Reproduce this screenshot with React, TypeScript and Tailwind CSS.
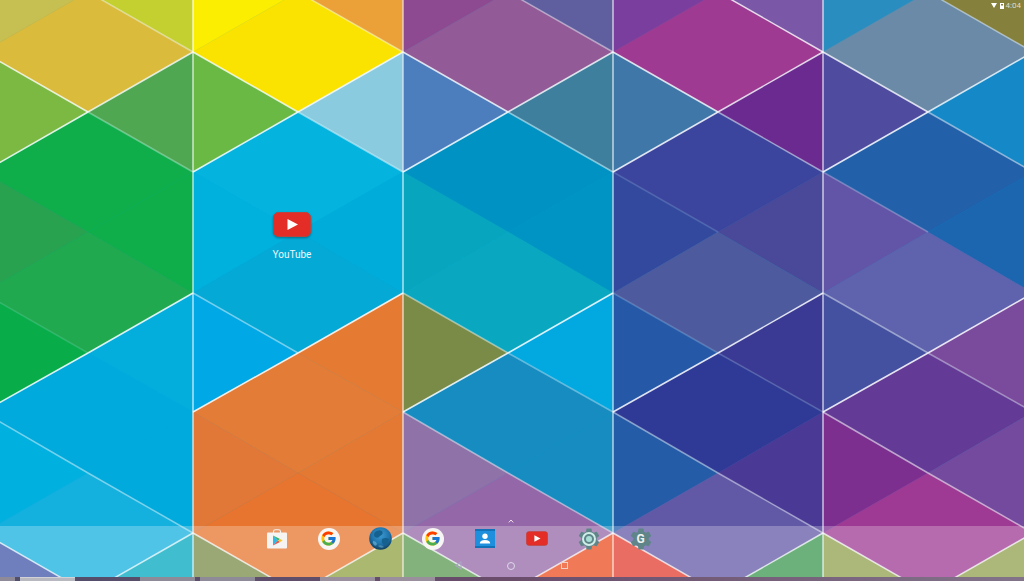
import type { ReactNode } from "react";
import { FcGoogle } from "react-icons/fc";
import { MdSettings } from "react-icons/md";

// lattice rows: even columns sit on Y0 + n * 120.3, odd columns are half a step off
const L = [-17, 88, 193]; // one strip: left edge, middle, right edge
const rowY = { a: -68, b: -8, c: 52, d: 112, e: 172, f: 232, g: 293, h: 353, i: 412, j: 473, k: 533, l: 593 };

type Strip = {
  x: number;
  topL: string;
  top: string;
  topR: string;
  l1: string;
  r1: string;
  d2: string;
  l2: string;
  r2: string;
  d3: string;
  l3: string;
  r3: string;
  d4: string;
  l4: string;
  r4: string;
  d5: string;
};

const strips: Strip[] = [
  { x: 0, topL: "#c6bf52", top: "#dabb3c", topR: "#c3d030", l1: "#7bb943", r1: "#50a752", d2: "#0fae4b", l2: "#29a24f", r2: "#0fae4b", d3: "#20a94e", l3: "#08ad4a", r3: "#03aedd", d4: "#00aadc", l4: "#00b1e0", r4: "#00aadc", d5: "#14b0de" },
  { x: 210, topL: "#fbee00", top: "#fae300", topR: "#eba038", l1: "#6bb945", r1: "#8bcbe0", d2: "#04b3de", l2: "#00b0dd", r2: "#00acd9", d3: "#04a9d6", l3: "#00a8e6", r3: "#e57a33", d4: "#e37c37", l4: "#e27838", r4: "#e47934", d5: "#e7752f" },
  { x: 420, topL: "#8e4a90", top: "#925a96", topR: "#5f5f9f", l1: "#4c7dbd", r1: "#3e7f9e", d2: "#0092c2", l2: "#08a5bf", r2: "#0094c4", d3: "#0aa8c0", l3: "#7a8b47", r3: "#02a8e0", d4: "#168cc0", l4: "#8f72a8", r4: "#168cc0", d5: "#9468a8" },
  { x: 630, topL: "#7a3f9e", top: "#9e3a92", topR: "#7b57a8", l1: "#3f78a8", r1: "#6a2a90", d2: "#3b459e", l2: "#32499e", r2: "#4a4898", d3: "#4d5a9e", l3: "#2559a8", r3: "#3a3a94", d4: "#2e3a96", l4: "#255ca8", r4: "#4a3a96", d5: "#6259a6" },
  { x: 840, topL: "#2a8dbf", top: "#6a8aa8", topR: "#85803c", l1: "#4f4c9f", r1: "#1589c8", d2: "#2260aa", l2: "#6255a8", r2: "#1c66b0", d3: "#5f62ad", l3: "#4450a0", r3: "#7a4a9c", d4: "#633a96", l4: "#7d2f90", r4: "#734a9e", d5: "#9e3a94" },
];

const poly = (p: number[][]) => p.map((q) => q.join(",")).join(" ");

// a line goes strip index, from node, to node, opacity
const diag = (
  s: number,
  a: number,
  ay: number,
  b: number,
  by: number,
  o: number
) => (
  <line
    key={`${s}-${a}-${ay}-${b}-${by}`}
    x1={L[a] + s * 210}
    y1={ay}
    x2={L[b] + s * 210}
    y2={by}
    stroke="#fff"
    strokeOpacity={o}
    strokeWidth={1.5}
  />
);

const Wallpaper = () => {
  const { a, b, c, d, e, f, g, h, i, j, k, l } = rowY;
  return (
    <svg className="absolute inset-0 blur-[0.4px]" width={1024} height={581} viewBox="0 0 1024 581">
      {strips.map((s) => {
        const [x0, x1, x2] = [L[0] + s.x, L[1] + s.x, L[2] + s.x];
        const tris: [string, number[][]][] = [
          [s.topL, [[x0, a], [x1, b], [x0, c]]],
          [s.topR, [[x2, a], [x1, b], [x2, c]]],
          [s.topL, [[x0, a], [x2, a], [x1, b]]],
          [s.top, [[x0, c], [x1, b], [x2, c], [x1, d]]],
          [s.l1, [[x0, c], [x1, d], [x0, e]]],
          [s.r1, [[x2, c], [x1, d], [x2, e]]],
          [s.d2, [[x0, e], [x1, d], [x2, e], [x1, f]]],
          [s.l2, [[x0, e], [x1, f], [x0, g]]],
          [s.r2, [[x2, e], [x1, f], [x2, g]]],
          [s.d3, [[x0, g], [x1, f], [x2, g], [x1, h]]],
          [s.l3, [[x0, g], [x1, h], [x0, i]]],
          [s.r3, [[x2, g], [x1, h], [x2, i]]],
          [s.d4, [[x0, i], [x1, h], [x2, i], [x1, j]]],
          [s.l4, [[x0, i], [x1, j], [x0, k]]],
          [s.r4, [[x2, i], [x1, j], [x2, k]]],
          [s.d5, [[x0, k], [x1, j], [x2, k], [x1, l]]],
        ];
        return tris.map(([fill, pts], n) => (
          <polygon key={`${s.x}-${n}`} points={poly(pts)} fill={fill} stroke={fill} strokeWidth={0.5} />
        ));
      })}

      {/* bottom triangles, only seen through the dock */}
      <polygon points={poly([[-17, 533], [88, 593], [-17, 653]])} fill="#3f55a8" />
      <polygon points={poly([[193, 533], [88, 593], [193, 653]])} fill="#00a9c0" />
      <polygon points={poly([[193, 533], [298, 593], [193, 653]])} fill="#798b49" />
      <polygon points={poly([[403, 533], [298, 593], [403, 653]])} fill="#8fa03f" />
      <polygon points={poly([[403, 533], [508, 593], [403, 653]])} fill="#5b9950" />
      <polygon points={poly([[613, 533], [508, 593], [613, 653]])} fill="#eb4d20" />
      <polygon points={poly([[613, 533], [718, 593], [613, 653]])} fill="#e33c2f" />
      <polygon points={poly([[823, 533], [718, 593], [823, 653]])} fill="#3b9650" />
      <polygon points={poly([[823, 533], [928, 593], [823, 653]])} fill="#91a04d" />
      <polygon points={poly([[1033, 533], [928, 593], [1033, 653]])} fill="#91a04d" />

      {[193, 403, 613, 823].map((x) => (
        <line key={x} x1={x} y1={0} x2={x} y2={581} stroke="#fff" strokeOpacity={0.65} strokeWidth={1.6} />
      ))}

      {/* strongest seams around the upper hexagons */}
      {[0, 1, 2, 3, 4].flatMap((s) => [
        diag(s, 0, c, 1, d, 0.8),
        diag(s, 1, d, 2, c, 0.8),
        diag(s, 0, e, 1, d, 0.85),
        diag(s, 1, d, 2, e, s === 0 ? 0.35 : 0.5),
        diag(s, 0, i, 1, h, 0.85),
        diag(s, 1, h, 2, g, 0.85),
        diag(s, 1, b, 2, c, s === 3 ? 0.8 : 0.45),
        diag(s, 0, k, 1, l, 0.75),
        diag(s, 1, l, 2, k, 0.75),
      ])}

      {/* softer seams */}
      {diag(0, 0, i, 1, j, 0.45)}
      {diag(0, 1, j, 2, k, 0.45)}
      {diag(0, 0, g, 1, h, 0.15)}
      {diag(1, 0, g, 1, h, 0.45)}
      {diag(2, 0, g, 1, h, 0.45)}
      {diag(2, 1, h, 2, i, 0.35)}
      {diag(2, 0, i, 1, j, 0.45)}
      {diag(2, 1, j, 2, k, 0.45)}
      {diag(3, 0, g, 1, h, 0.2)}
      {diag(3, 1, h, 2, i, 0.2)}
      {diag(3, 0, i, 1, j, 0.45)}
      {diag(3, 1, j, 2, k, 0.45)}
      {diag(4, 0, g, 1, h, 0.45)}
      {diag(4, 1, h, 2, i, 0.4)}
      {diag(4, 0, i, 1, j, 0.55)}
      {diag(4, 1, j, 2, k, 0.55)}
      {diag(3, 0, e, 1, f, 0.15)}
      {diag(4, 0, e, 1, f, 0.25)}
    </svg>
  );
};

const YouTubeIcon = ({ w, h }: { w: number; h: number }) => (
  <svg width={w} height={h} viewBox="0 0 38 25">
    <rect x={0.5} y={0.5} width={37} height={24} rx={5} fill="#e52d27" stroke="#b8453f" strokeWidth={1} />
    <path d="M14.5 7 L25 12.5 L14.5 18 Z" fill="#fff" />
  </svg>
);

const PlayStore = () => (
  <svg width={22} height={20} viewBox="0 0 22 20">
    <path d="M7.5 4 V2.5 Q7.5 .8 9.5 .8 H12.5 Q14.5 .8 14.5 2.5 V4" fill="none" stroke="#f4f4f4" strokeWidth={1.1} />
    <rect x={1} y={3.5} width={20} height={16} rx={1} fill="#f6f4f2" />
    <path d="M7 6.5 L12 11.5 L7 16.5 Z" fill="#2fb8e8" />
    <path d="M7 6.5 L14 10 L12 11.5 Z" fill="#35b06a" />
    <path d="M7 16.5 L14 13 L12 11.5 Z" fill="#e8524a" />
    <path d="M14 10 L16.6 11.5 L14 13 L12 11.5 Z" fill="#f8c62c" />
  </svg>
);

const Globe = () => (
  <svg width={23} height={23} viewBox="0 0 23 23">
    <defs>
      <radialGradient id="globe" cx="50%" cy="35%" r="65%">
        <stop offset="0%" stopColor="#3a9ad0" />
        <stop offset="62%" stopColor="#1e72aa" />
        <stop offset="100%" stopColor="#123e5e" />
      </radialGradient>
    </defs>
    <circle cx={11.5} cy={11.5} r={11.3} fill="url(#globe)" />
    <path d="M6 5 Q10 2 13 4 Q15 7 11 9 Q9 12 6 10 Q4 8 6 5Z" fill="#14608e" />
    <path d="M13 12 Q17 10 20 12 Q19 17 15 18 Q12 16 13 12Z" fill="#14608e" />
    <path d="M4 14 Q7 14 8 17 Q7 20 5 18 Q3 16 4 14Z" fill="#8ccbe6" fillOpacity={0.5} />
    <path d="M9 19 Q12 17 15 20 Q12 22 9 19Z" fill="#8ccbe6" fillOpacity={0.4} />
  </svg>
);

const GoogleBadge = () => (
  <div className="flex h-[22px] w-[22px] items-center justify-center rounded-full bg-[#f8f6f4]">
    <FcGoogle size={17} />
  </div>
);

const Contacts = () => (
  <svg width={20} height={19} viewBox="0 0 20 19">
    <rect x={0} y={0} width={20} height={19} rx={1} fill="#1e8fdc" />
    <rect x={0} y={0} width={20} height={2} fill="#1272b8" />
    <rect x={0} y={17} width={20} height={2} fill="#1272b8" />
    <circle cx={10} cy={7.2} r={2.7} fill="#fff" />
    <path d="M4.8 14.5 Q4.8 11 10 11 Q15.2 11 15.2 14.5 Z" fill="#fff" />
  </svg>
);

const Gear = ({ children }: { children: ReactNode }) => (
  <div className="relative flex h-[26px] w-[26px] items-center justify-center">
    <MdSettings size={26} color="#5f8589" className="absolute inset-0" />
    {children}
  </div>
);

const dockItem = "flex h-[24px] w-[26px] items-center justify-center";

const App = () => {
  return (
    <div className="relative flex h-[581px] w-[1024px] flex-col overflow-hidden bg-[#00aadc] font-['Roboto',sans-serif]">
      <Wallpaper />

      {/* status bar */}
      <div className="relative flex h-[11px] items-center justify-end pr-[3px] text-[8px] leading-none text-[#dcdccc]">
        <svg width={6} height={5} viewBox="0 0 6 5" className="mr-[3px]">
          <path d="M0 0 H6 L3 5 Z" fill="#fff" />
        </svg>
        <svg width={4} height={6} viewBox="0 0 4 6" className="mr-[2px]">
          <rect x={0.5} y={0.5} width={3} height={5} fill="none" stroke="#fff" strokeWidth={1} />
          <rect x={1} y={2.5} width={2} height={3} fill="#fff" />
        </svg>
        <span>4:04</span>
      </div>

      {/* desktop */}
      <div className="relative flex-1 pl-[262px] pt-[201px]">
        <div className="flex w-[60px] flex-col items-center">
          <div className="drop-shadow-[0_1px_1px_rgba(0,0,0,0.35)]">
            <YouTubeIcon w={38} h={25} />
          </div>
          <span className="mt-[12px] text-[10px] leading-[12px] text-[#eef7fb]">YouTube</span>
        </div>
      </div>

      {/* all apps arrow */}
      <div className="relative flex h-[7px] items-start justify-center">
        <svg width={6} height={4} viewBox="0 0 6 4" className="ml-[-2px]">
          <path d="M.8 3.4 L3 1 L5.2 3.4" fill="none" stroke="#eee3ee" strokeWidth={1} />
        </svg>
      </div>

      {/* dock + nav */}
      <div className="relative flex h-[51px] flex-col items-center bg-white/25">
        <div className="mr-[107px] flex h-[24px] items-center gap-[26px] pt-[1px]">
          <div className={dockItem}><PlayStore /></div>
          <div className={dockItem}><GoogleBadge /></div>
          <div className={dockItem}><Globe /></div>
          <div className={dockItem}><GoogleBadge /></div>
          <div className={dockItem}><Contacts /></div>
          <div className={dockItem}><YouTubeIcon w={22} h={15} /></div>
          <div className={dockItem}>
            <Gear>
              <div className="relative h-[14px] w-[14px] rounded-full border-[2px] border-[#cfeee8] bg-[#5f8589] p-[2px]">
                <div className="h-full w-full rounded-full bg-[#a8ded6]" />
              </div>
            </Gear>
          </div>
          <div className={dockItem}>
            <Gear>
              <div className="absolute left-[7px] top-[7px] h-[12px] w-[12px] rounded-full bg-[#5f8589]" />
              <span className="relative text-[12px] font-bold leading-none text-[#eef2f0]">G</span>
            </Gear>
          </div>
        </div>
        <div className="mr-[2px] mt-[11px] flex h-[9px] items-center">
          <svg width={9} height={9} viewBox="0 0 9 9" className="mr-[44px]">
            <path d="M7 1 L1.5 4.5 L7 8 Z" fill="none" stroke="#a9a4c2" strokeWidth={1.1} />
          </svg>
          <div className="h-[8px] w-[8px] rounded-full border border-[#e0d8ea]" />
          <div className="ml-[46px] h-[7px] w-[7px] border border-[#f3d0c4]" />
        </div>
      </div>

      {/* host taskbar along the bottom edge */}
      <div className="relative flex h-[4px] gap-[5px] bg-gradient-to-r from-[#504e6a] via-[#6a4d6b] to-[#82738a]">
        <div className="w-[15px] bg-[#8f8a98]" />
        <div className="w-[55px] border-t border-[#d0d2d6] bg-[#b8b8c0]" />
        <div className="ml-[60px] w-[55px] bg-[#8f8a98]" />
        <div className="w-[55px] bg-[#8f8a98]" />
        <div className="ml-[60px] w-[55px] bg-[#9a8f9c]" />
        <div className="w-[55px] bg-[#9a8f9c]" />
      </div>
    </div>
  );
};

export default App;
